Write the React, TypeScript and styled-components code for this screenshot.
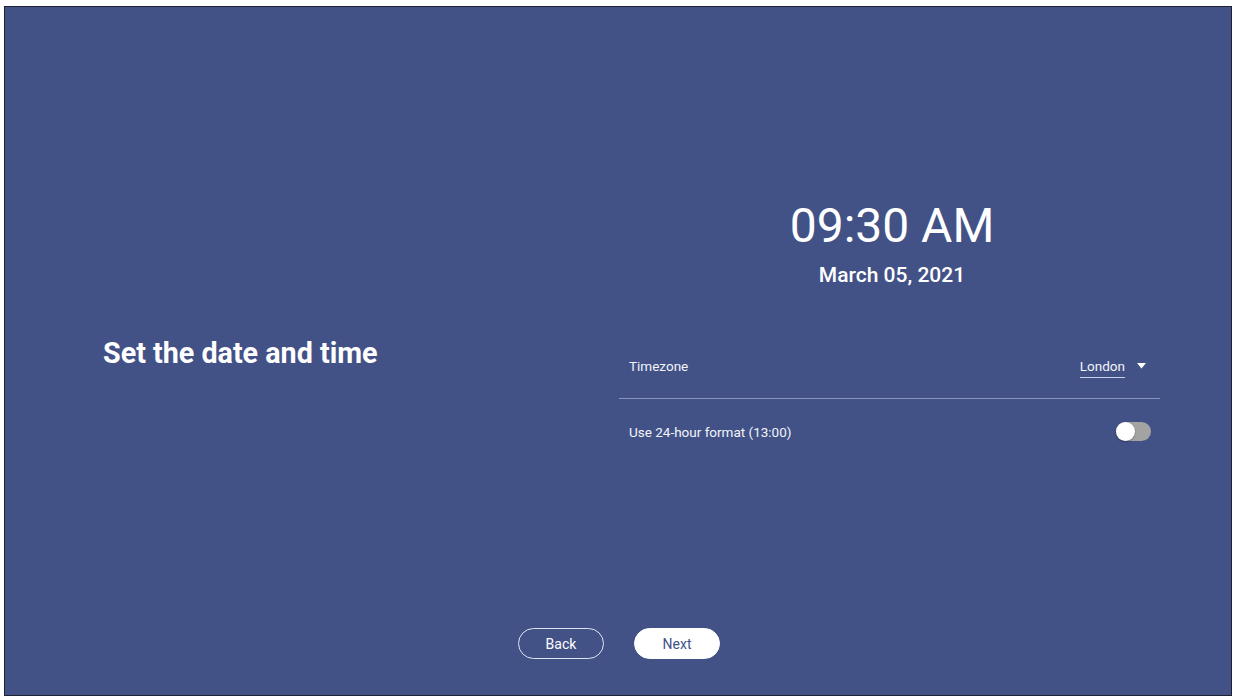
import styled, { createGlobalStyle } from "styled-components";

const GlobalStyle = createGlobalStyle`
  html, body {
    margin: 0;
    padding: 0;
    background: #ffffff;
  }
  body {
    font-family: Roboto, "Liberation Sans", Arial, sans-serif;
  }
`;

const Page = styled.div`
  width: 1234px;
  height: 698px;
  padding: 6px 0 0 4px;
  box-sizing: border-box;
`;

const Frame = styled.div`
  width: 1228px;
  height: 690px;
  box-sizing: border-box;
  border: 1px solid #1f2230;
  background: #425287;
  display: flex;
  flex-direction: column;
  color: #ffffff;
`;

const Main = styled.div`
  flex: 1;
  display: grid;
  grid-template-columns: 614px 1fr;
`;

const LeftColumn = styled.div`
  padding: 332px 0 0 98px;
`;

const Title = styled.h1`
  margin: 0;
  font-size: 28.7px;
  line-height: 1;
  font-weight: 700;
  letter-spacing: 0;
`;

const RightColumn = styled.div`
  width: 541px;
  padding-top: 195px;
  display: flex;
  flex-direction: column;
`;

const Clock = styled.div`
  display: flex;
  flex-direction: column;
  align-items: center;
  padding-left: 5px;
`;

const Time = styled.div`
  font-size: 48px;
  line-height: 1;
  font-weight: 400;
`;

const DateText = styled.div`
  margin-top: 15px;
  font-size: 21px;
  line-height: 1;
  font-weight: 500;
`;

const SettingRow = styled.div<{ $divider?: boolean; $height: number }>`
  height: ${(p) => p.$height}px;
  padding: 0 9px 0 10px;
  display: flex;
  align-items: center;
  justify-content: space-between;
  border-bottom: ${(p) => (p.$divider ? "1px solid #8794bd" : "none")};
`;

const FirstRow = styled(SettingRow)`
  margin-top: 48px;
`;

const Label = styled.span`
  font-size: 13.5px;
  color: #f2f4fa;
`;

const Dropdown = styled.div`
  display: flex;
  align-items: center;
`;

const DropdownValue = styled.span`
  font-size: 13.5px;
  color: #f2f4fa;
  padding-bottom: 3px;
  border-bottom: 1px solid #c9d0e6;
  margin-top: 4px;
`;

const Caret = styled.svg`
  margin: 0 5px 0 12px;
`;

const Toggle = styled.div<{ $on: boolean }>`
  width: 35px;
  height: 19px;
  border-radius: 10px;
  background: ${(p) => (p.$on ? "#8fa3e0" : "#a3a3a3")};
  display: flex;
  align-items: center;
  justify-content: ${(p) => (p.$on ? "flex-end" : "flex-start")};
`;

const Knob = styled.div`
  width: 19px;
  height: 19px;
  border-radius: 50%;
  background: #ffffff;
  box-shadow: 0 1px 2px rgba(0, 0, 0, 0.3);
`;

const Footer = styled.div`
  display: flex;
  justify-content: center;
  gap: 30px;
  padding-bottom: 36px;
  padding-left: 2px;
`;

const Button = styled.button<{ $primary?: boolean }>`
  width: 86px;
  height: 31px;
  border-radius: 16px;
  box-sizing: border-box;
  border: 1px solid ${(p) => (p.$primary ? "#ffffff" : "#dfe4f3")};
  background: ${(p) => (p.$primary ? "#ffffff" : "transparent")};
  color: ${(p) => (p.$primary ? "#42538a" : "#ffffff")};
  font-family: Roboto, "Liberation Sans", Arial, sans-serif;
  font-size: 14px;
  padding: 0;
  cursor: pointer;
`;

export default function App() {
  return (
    <Page>
      <GlobalStyle />
      <Frame>
        <Main>
          <LeftColumn>
            <Title>Set the date and time</Title>
          </LeftColumn>
          <RightColumn>
            <Clock>
              <Time>09:30 AM</Time>
              <DateText>March 05, 2021</DateText>
            </Clock>
            <FirstRow $divider $height={64}>
              <Label>Timezone</Label>
              <Dropdown>
                <DropdownValue>London</DropdownValue>
                <Caret width="9" height="6" viewBox="0 0 9 6">
                  <path d="M0 0 L9 0 L4.5 5.5 Z" fill="#ffffff" />
                </Caret>
              </Dropdown>
            </FirstRow>
            <SettingRow $height={65}>
              <Label>Use 24-hour format (13:00)</Label>
              <Toggle $on={false}>
                <Knob />
              </Toggle>
            </SettingRow>
          </RightColumn>
        </Main>
        <Footer>
          <Button>Back</Button>
          <Button $primary>Next</Button>
        </Footer>
      </Frame>
    </Page>
  );
}
